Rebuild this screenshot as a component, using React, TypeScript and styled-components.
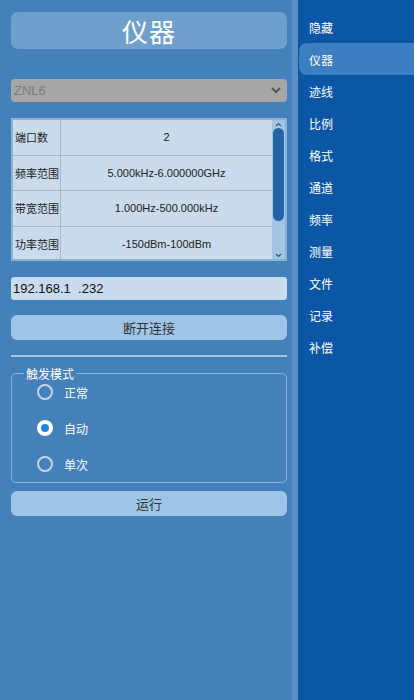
import React, { useState } from "react";
import styled, { createGlobalStyle } from "styled-components";

const GlobalStyle = createGlobalStyle`
  html, body {
    margin: 0;
    padding: 0;
    height: 100%;
  }
  body {
    font-family: "Liberation Sans", "Noto Sans CJK SC", sans-serif;
    background: #4480b9;
  }
`;

const Page = styled.div`
  display: flex;
  width: 414px;
  height: 700px;
  overflow: hidden;
`;

const Main = styled.div`
  width: 298px;
  flex-shrink: 0;
  box-sizing: border-box;
  background: #4480b9;
  border-right: 6px solid #5a8fc4;
  padding: 12px 5px 0 11px;
  display: flex;
  flex-direction: column;
`;

const Title = styled.div`
  height: 37px;
  border-radius: 7px;
  background: #6f9fcc;
  color: #fff;
  font-family: "Noto Sans CJK SC", sans-serif;
  font-size: 26px;
  font-weight: 400;
  display: flex;
  align-items: center;
  justify-content: center;
  letter-spacing: 1px;
`;

const Select = styled.div`
  margin-top: 30px;
  height: 23px;
  border-radius: 4px;
  background: #a6a6a6;
  color: #7c7c7c;
  font-size: 13px;
  display: flex;
  align-items: center;
  justify-content: space-between;
  padding: 0 6px 0 3px;
`;

const TableBox = styled.div`
  margin-top: 16px;
  height: 143px;
  box-sizing: border-box;
  border: 2px solid #8db2d8;
  background: #c9dbec;
  display: flex;
  overflow: hidden;
`;

const Rows = styled.div`
  flex: 1;
  display: flex;
  flex-direction: column;
`;

const Row = styled.div`
  display: grid;
  grid-template-columns: 48px 1fr;
  height: 35.5px;
  box-sizing: border-box;
  flex-shrink: 0;
  border-bottom: 1px solid #a7b8c9;
  font-size: 11px;
  color: #222;
`;

const LabelCell = styled.div`
  display: flex;
  align-items: center;
  padding-left: 2px;
  border-right: 1px solid #a7b8c9;
  font-family: "Noto Sans CJK SC", sans-serif;
`;

const ValueCell = styled.div`
  display: flex;
  align-items: center;
  justify-content: center;
`;

const ScrollTrack = styled.div`
  width: 13px;
  background: #a2c5e6;
  display: flex;
  flex-direction: column;
  align-items: center;
`;

const Arrow = styled.div`
  height: 8px;
  display: flex;
  align-items: center;
  justify-content: center;
`;

const Thumb = styled.div`
  width: 11px;
  height: 93px;
  border-radius: 6px;
  background: #2563a8;
`;

const Spacer = styled.div`
  flex: 1;
`;

const Input = styled.div`
  margin-top: 16px;
  height: 23px;
  border-radius: 3px;
  background: #c9dbec;
  color: #111;
  font-size: 13px;
  display: flex;
  align-items: center;
  padding-left: 2px;
  white-space: pre;
`;

const Button = styled.button<{ $top: number }>`
  margin-top: ${(p) => p.$top}px;
  height: 25px;
  border: none;
  border-radius: 6px;
  background: #9ec5e5;
  color: #333;
  font-family: "Noto Sans CJK SC", sans-serif;
  font-size: 13px;
  padding: 0;
  cursor: pointer;
`;

const Divider = styled.div`
  margin-top: 15px;
  height: 2px;
  background: #a3c3e3;
`;

const Fieldset = styled.fieldset`
  margin: 10px 0 0;
  padding: 0;
  border: 1px solid #89aed6;
  border-radius: 5px;
  min-width: 0;
`;

const Legend = styled.legend`
  margin-left: 12px;
  padding: 0 2px;
  color: #fff;
  font-family: "Noto Sans CJK SC", sans-serif;
  font-size: 12px;
  line-height: 13px;
`;

const RadioList = styled.div`
  margin-top: -6px;
  display: flex;
  flex-direction: column;
`;

const RadioRow = styled.label`
  display: flex;
  align-items: center;
  height: 36px;
  padding-left: 25px;
  gap: 11px;
  color: #fff;
  font-family: "Noto Sans CJK SC", sans-serif;
  font-size: 12px;
  cursor: pointer;
`;

const RadioDot = styled.span<{ $on: boolean }>`
  width: 16px;
  height: 16px;
  box-sizing: border-box;
  border-radius: 50%;
  border: ${(p) => (p.$on ? "4px solid #fff" : "2px solid #c6d6e6")};
  background: ${(p) => (p.$on ? "#1b88d8" : "transparent")};
`;

const Sidebar = styled.nav`
  flex: 1;
  background: #0b57a5;
  padding-top: 11px;
  display: flex;
  flex-direction: column;
`;

const NavItem = styled.div<{ $active?: boolean }>`
  height: 32px;
  display: flex;
  align-items: center;
  padding-left: 10px;
  margin-left: 1px;
  border-radius: 8px 0 0 8px;
  background: ${(p) => (p.$active ? "#3d7ec0" : "transparent")};
  color: #fff;
  font-family: "Noto Sans CJK SC", sans-serif;
  font-size: 12px;
`;

const rows = [
  ["端口数", "2"],
  ["频率范围", "5.000kHz-6.000000GHz"],
  ["带宽范围", "1.000Hz-500.000kHz"],
  ["功率范围", "-150dBm-100dBm"],
];

const nav = ["隐藏", "仪器", "迹线", "比例", "格式", "通道", "频率", "测量", "文件", "记录", "补偿"];
const modes = ["正常", "自动", "单次"];

export default function App() {
  const [mode, setMode] = useState(1);
  return (
    <>
      <GlobalStyle />
      <Page>
        <Main>
          <Title>仪器</Title>
          <Select>
            <span>ZNL6</span>
            <svg width="10" height="7" viewBox="0 0 10 7">
              <path d="M1 1l4 4 4-4" fill="none" stroke="#555" strokeWidth="2" />
            </svg>
          </Select>
          <TableBox>
            <Rows>
              {rows.map(([k, v]) => (
                <Row key={k}>
                  <LabelCell>{k}</LabelCell>
                  <ValueCell>{v}</ValueCell>
                </Row>
              ))}
            </Rows>
            <ScrollTrack>
              <Arrow>
                <svg width="7" height="5" viewBox="0 0 7 5">
                  <path d="M1 4l2.5-2.5L6 4" fill="none" stroke="#35577a" strokeWidth="1.2" />
                </svg>
              </Arrow>
              <Thumb />
              <Spacer />
              <Arrow>
                <svg width="7" height="5" viewBox="0 0 7 5">
                  <path d="M1 1l2.5 2.5L6 1" fill="none" stroke="#35577a" strokeWidth="1.2" />
                </svg>
              </Arrow>
            </ScrollTrack>
          </TableBox>
          <Input>192.168.1  .232</Input>
          <Button $top={15}>断开连接</Button>
          <Divider />
          <Fieldset>
            <Legend>触发模式</Legend>
            <RadioList>
              {modes.map((m, i) => (
                <RadioRow key={m} onClick={() => setMode(i)}>
                  <RadioDot $on={mode === i} />
                  {m}
                </RadioRow>
              ))}
            </RadioList>
          </Fieldset>
          <Button $top={8}>运行</Button>
        </Main>
        <Sidebar>
          {nav.map((n) => (
            <NavItem key={n} $active={n === "仪器"}>
              {n}
            </NavItem>
          ))}
        </Sidebar>
      </Page>
    </>
  );
}
